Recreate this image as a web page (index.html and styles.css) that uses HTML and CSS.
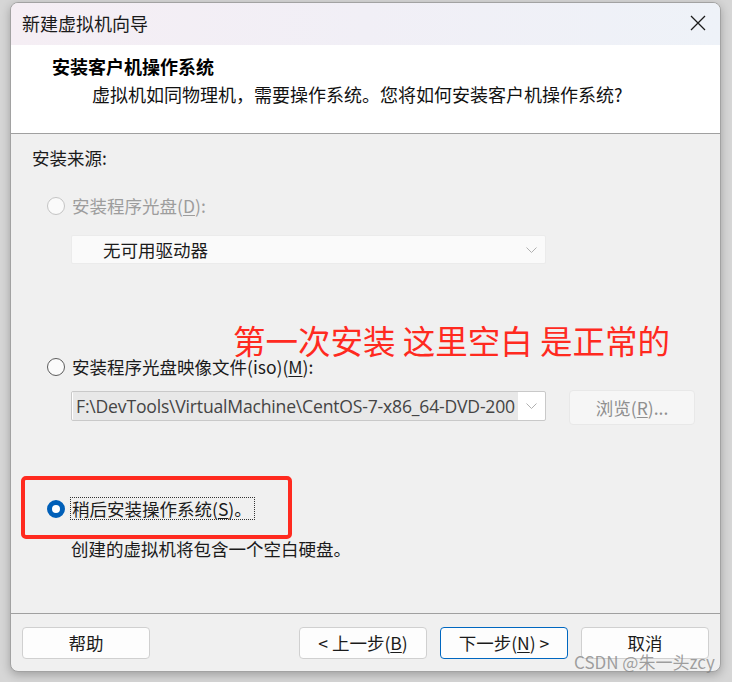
FILE: index.html
```html
<!DOCTYPE html>
<html lang="zh-CN">
<head>
<meta charset="utf-8">
<title>新建虚拟机向导</title>
<link rel="stylesheet" href="styles.css">
</head>
<body>
<div class="window">
  <div class="titlebar">
    <span class="title">新建虚拟机向导</span>
    <svg class="close" width="16" height="16" viewBox="0 0 16 16"><path d="M1 1 L15 15 M15 1 L1 15" stroke="#1b1b1b" stroke-width="1.3" fill="none"/></svg>
  </div>
  <div class="header">
    <div class="h-title">安装客户机操作系统</div>
    <div class="h-sub">虚拟机如同物理机，需要操作系统。您将如何安装客户机操作系统?</div>
  </div>
  <div class="content">
    <div class="section-label">安装来源:</div>
    <div class="radio-row r1">
      <span class="radio disabled"></span>
      <span class="label disabled-text">安装程序光盘(<u>D</u>):</span>
    </div>
    <div class="select s1">
      <span class="select-text">无可用驱动器</span>
      <svg class="chev" width="11" height="7" viewBox="0 0 11 7"><path d="M0.5 0.5 L5.5 5.5 L10.5 0.5" stroke="#b0b0b0" stroke-width="1" fill="none"/></svg>
    </div>
    <div class="radio-row r2">
      <span class="radio"></span>
      <span class="label tight">安装程序光盘映像文件(iso)(<u>M</u>):</span>
    </div>
    <div class="file-row">
      <div class="select s2">
        <span class="path"><span class="path-sel">F:\DevTools\VirtualMachine\CentOS-7-x86_64-DVD-200</span></span>
        <svg class="chev" width="11" height="7" viewBox="0 0 11 7"><path d="M0.5 0.5 L5.5 5.5 L10.5 0.5" stroke="#b0b0b0" stroke-width="1" fill="none"/></svg>
      </div>
      <div class="browse">浏览(<u>R</u>)...</div>
    </div>
    <div class="radio-row r3">
      <span class="radio checked"></span>
      <span class="label focus">稍后安装操作系统(<u>S</u>)。</span>
    </div>
    <div class="desc">创建的虚拟机将包含一个空白硬盘。</div>
  </div>
  <div class="footer">
    <button class="btn">帮助</button>
    <div class="spacer"></div>
    <button class="btn">&lt; 上一步(<u>B</u>)</button>
    <button class="btn primary">下一步(<u>N</u>) &gt;</button>
    <button class="btn">取消</button>
  </div>
  <div class="note">第一次安装 这里空白 是正常的</div>
  <div class="redbox"></div>
</div>
<div class="watermark">CSDN @朱一头zcy</div>
</body>
</html>
```

FILE: styles.css
```css
html, body {
  margin: 0;
  padding: 0;
}
body {
  background: #d6d6d6;
  width: 732px;
  height: 682px;
  overflow: hidden;
  position: relative;
  font-family: "Noto Sans CJK SC", "Noto Sans", sans-serif;
  color: #1b1b1b;
}
.window {
  position: relative;
  margin: 2px 0 0 10px;
  width: 711px;
  height: 670px;
  box-sizing: border-box;
  border: 1px solid #a2a2a2;
  border-radius: 8px;
  overflow: hidden;
  display: flex;
  flex-direction: column;
  background: #f0f0f0;
  box-shadow: 0 3px 10px rgba(0,0,0,0.25);
}
.titlebar {
  height: 42px;
  flex: none;
  box-sizing: border-box;
  display: flex;
  align-items: center;
  justify-content: space-between;
  padding: 0 14px 3px 11px;
  background: linear-gradient(90deg, #f5eef4 0%, #f1eff6 50%, #eef2f8 100%);
}
.title {
  font-size: 18px;
  line-height: 24px;
  color: #1a1a1a;
}
.close { display: block; }
.header {
  height: 89px;
  flex: none;
  box-sizing: border-box;
  background: #ffffff;
  border-bottom: 1px solid #a0a0a0;
  padding: 9px 0 0 41px;
}
.h-title {
  font-size: 18px;
  font-weight: 700;
  line-height: 24px;
  color: #000;
}
.h-sub {
  margin: 4px 0 0 40px;
  font-size: 18px;
  line-height: 24px;
  color: #111;
}
.content {
  flex: 1;
  border-bottom: 1px solid #a0a0a0;
  padding: 12px 0 0 21px;
  font-size: 17.5px;
}
.section-label {
  line-height: 24px;
}
.radio-row {
  display: flex;
  align-items: center;
  margin-left: 15px;
  height: 24px;
}
.r1 { margin-top: 24px; }
.r2 { margin-top: 91px; }
.r3 { margin-top: 72px; height: 23px; }
.radio {
  width: 18px;
  height: 18px;
  box-sizing: border-box;
  border-radius: 50%;
  border: 1px solid #5c5c5c;
  background: #fbfbfb;
  flex: none;
  margin-right: 7px;
}
.radio.disabled {
  border-color: #c4c4c4;
  background: #fafafa;
}
.radio.checked {
  border: 5.5px solid #005fb8;
  background: #ffffff;
}
.label { line-height: 24px; }
.label.tight { line-height: 20px; }
.label u, .btn u, .browse u { text-decoration-thickness: 1px; text-underline-offset: 2px; }
.disabled-text { color: #9d9d9d; }
.focus {
  border: 1px dotted #333;
  line-height: 21px;
  margin-left: -2px;
  padding: 0 2px 0 1px;
}
.select {
  display: flex;
  align-items: center;
  box-sizing: border-box;
  width: 475px;
  margin-left: 39px;
  position: relative;
}
.s1 {
  margin-top: 17px;
  height: 29px;
  background: #fafafa;
  border: 1px solid #ebebeb;
  border-radius: 2px;
}
.select-text {
  margin-left: 31px;
  font-size: 17.5px;
  color: #1b1b1b;
}
.chev {
  position: absolute;
  right: 8px;
  top: 50%;
  margin-top: -3px;
}
.file-row {
  display: flex;
  align-items: flex-start;
  margin-top: 11px;
}
.s2 {
  margin-top: 1px;
  height: 30px;
  background: #ffffff;
  border: 1px solid #c9c9c9;
  border-radius: 2px;
  padding: 1px;
}
.path {
  display: block;
  width: 445px;
  height: 28px;
  overflow: hidden;
  white-space: nowrap;
  background: #e8e8e8;
}
.path-sel {
  display: inline-block;
  padding-left: 3px;
  font-family: "Open Sans", "Noto Sans", sans-serif;
  font-size: 17.6px;
  line-height: 28px;
  letter-spacing: -0.2px;
  color: #444;
}
.browse {
  margin-left: 23px;
  width: 126px;
  height: 35px;
  box-sizing: border-box;
  border: 1px solid #e8e8e8;
  border-radius: 4px;
  background: #f6f6f6;
  color: #8f8f8f;
  font-size: 17.5px;
  display: flex;
  align-items: center;
  justify-content: center;
}
.desc {
  margin: 17px 0 0 39px;
  line-height: 24px;
}
.footer {
  height: 57px;
  flex: none;
  display: flex;
  align-items: flex-start;
  padding: 13px 11px 0 11px;
  box-sizing: border-box;
  gap: 13px;
}
.spacer { flex: 1; }
.btn {
  width: 128px;
  height: 32px;
  box-sizing: border-box;
  border: 1px solid #d0d0d0;
  border-radius: 4px;
  background: #fdfdfd;
  font-family: "Noto Sans CJK SC", "Noto Sans", sans-serif;
  font-size: 17.5px;
  color: #1b1b1b;
  padding: 0;
  line-height: 24px;
}
.btn.primary {
  border-color: #0067c0;
}
.note {
  position: absolute;
  left: 222px;
  top: 322px;
  font-size: 32.5px;
  line-height: 30px;
  color: #ff2a1f;
  white-space: nowrap;
}
.redbox {
  position: absolute;
  left: 10px;
  top: 473px;
  width: 271px;
  height: 63px;
  box-sizing: border-box;
  border: 4px solid #ff2a1f;
  border-radius: 5px;
}
.watermark {
  position: absolute;
  left: 574px;
  top: 651px;
  font-size: 17px;
  line-height: 22px;
  color: rgba(130,130,130,0.75);
  white-space: nowrap;
  font-family: "Noto Sans CJK SC", "Noto Sans", sans-serif;
}
```
